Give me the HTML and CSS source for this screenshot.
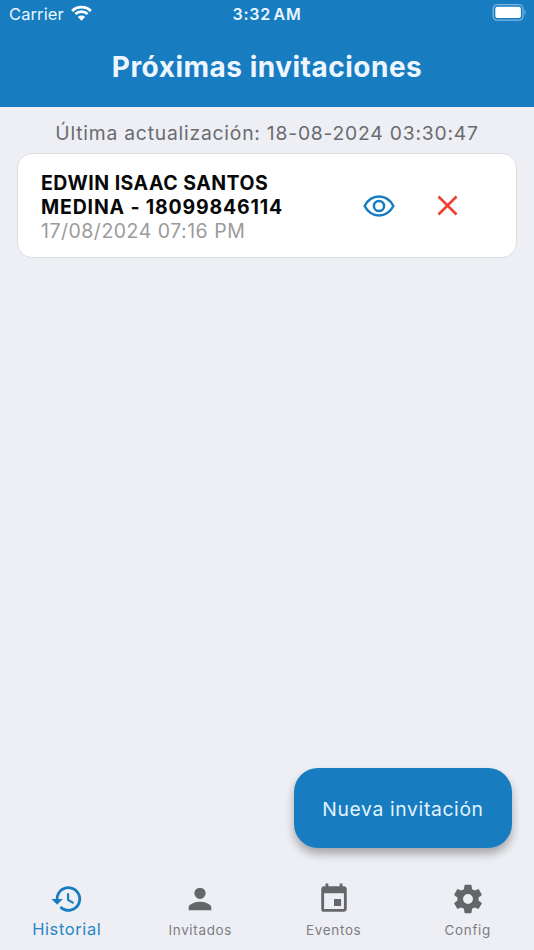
FILE: index.html
```html
<!DOCTYPE html>
<html lang="es">
<head>
<meta charset="utf-8">
<title>Próximas invitaciones</title>
<link rel="stylesheet" href="styles.css">
</head>
<body>
<div class="app">
  <header class="header">
    <div class="status">
      <div class="carrier"><span class="carrier-name">Carrier</span>
        <svg class="wifi" viewBox="0 0 22 16"><path d="M1.2 5.8a14 14 0 0 1 19.6 0M4.6 9.1a9.2 9.2 0 0 1 12.8 0" fill="none" stroke="#fff" stroke-width="2.9"/><path d="M7.2 12.1a5.4 5.4 0 0 1 7.6 0L11 16z" fill="#fff"/></svg>
      </div>
      <span class="time">3:32<span class="meridiem">AM</span></span>
      <div class="power"><svg class="battery" viewBox="0 0 35 17"><rect x="1.2" y=".7" width="29.8" height="15.4" rx="4" fill="none" stroke="#7db8e2" stroke-width="1.3"/><rect x="3.3" y="2.8" width="25.6" height="11.2" rx="2" fill="#fff"/><path d="M32.6 5.6q2.2 2.8 0 5.6z" fill="#7db8e2"/></svg></div>
    </div>
    <h1 class="title">Próximas invitaciones</h1>
  </header>
  <main class="content">
    <p class="updated">Última actualización: 18-08-2024 03:30:47</p>
    <article class="card">
      <div class="info">
        <div class="name">EDWIN ISAAC SANTOS<br><span class="name-second">MEDINA - 18099846114</span></div>
        <div class="date">17/08/2024 07:16 PM</div>
      </div>
      <svg class="eye" viewBox="0 0 32 22"><path d="M1.6 11C4.5 5.6 9.6 1.6 16 1.6S27.5 5.6 30.4 11C27.5 16.4 22.4 20.4 16 20.4S4.5 16.4 1.6 11Z" fill="none" stroke="#187dc0" stroke-width="2.5" stroke-linejoin="round"/><circle cx="16" cy="11" r="5.1" fill="none" stroke="#187dc0" stroke-width="2.5"/></svg>
      <svg class="cross" viewBox="0 0 20 20"><path d="M1.4 1.4l17.2 17.2M18.6 1.4l-17.2 17.2" fill="none" stroke="#f03e32" stroke-width="2.5"/></svg>
    </article>
    <button class="new">Nueva invitación</button>
  </main>
  <nav class="tabs">
    <div class="tab active"><svg viewBox="0 0 24 24"><path d="M13 3a9 9 0 0 0-9 9H1l3.890 3.890.070.140L9 12H6a7 7 0 1 1 2.060 4.940l-1.420 1.420A9 9 0 1 0 13 3zm-1 5v5l4.280 2.540.720-1.210-3.500-2.080V8H12z"/></svg><span>Historial</span></div>
    <div class="tab"><svg viewBox="0 0 24 24"><path d="M12 12a4 4 0 1 0 0-8 4 4 0 0 0 0 8zm0 2c-2.670 0-8 1.340-8 4v2h16v-2c0-2.660-5.330-4-8-4z"/></svg><span>Invitados</span></div>
    <div class="tab"><svg viewBox="0 0 24 24"><path d="M17 12h-5v5h5v-5zM16 1v2H8V1H6v2H5c-1.110 0-1.990.9-1.990 2L3 19a2 2 0 0 0 2 2h14c1.100 0 2-.9 2-2V5c0-1.100-.9-2-2-2h-1V1h-2zm3 18H5V8h14v11z"/></svg><span>Eventos</span></div>
    <div class="tab config"><svg viewBox="0 0 24 24"><path d="M19.430 12.980c.040-.320.070-.640.070-.980s-.030-.660-.070-.980l2.110-1.650c.190-.150.240-.420.120-.640l-2-3.460c-.120-.220-.390-.300-.610-.220l-2.490 1c-.520-.400-1.080-.730-1.690-.980l-.380-2.650A.488.488 0 0 0 14 2h-4c-.250 0-.460.180-.490.420l-.380 2.650c-.610.250-1.170.590-1.690.980l-2.490-1c-.230-.090-.490 0-.610.220l-2 3.460c-.130.220-.070.490.120.640l2.110 1.650c-.040.320-.070.650-.070.980s.030.660.070.980l-2.110 1.650c-.190.150-.240.420-.120.640l2 3.460c.120.220.390.300.610.220l2.490-1c.520.400 1.080.730 1.690.980l.380 2.650c.030.240.240.420.490.420h4c.250 0 .460-.180.490-.420l.380-2.650c.610-.250 1.170-.590 1.690-.980l2.490 1c.230.090.490 0 .610-.220l2-3.460c.120-.220.070-.490-.120-.640l-2.110-1.650zM12 15.500a3.500 3.500 0 1 1 0-7 3.500 3.500 0 0 1 0 7z"/></svg><span>Config</span></div>
  </nav>
</div>
</body>
</html>
```
FILE: styles.css
```css
* { box-sizing: border-box; }
body { margin: 0; font-family: Inter, "Liberation Sans", sans-serif; background: #eeeff4; }
.app { width: 534px; height: 950px; display: flex; flex-direction: column; overflow: hidden; }
.header { height: 107px; background: #187dc0; color: #edf5ff; flex: none; }
.status { height: 27px; display: grid; grid-template-columns: 1fr auto 1fr; align-items: center; font-size: 16.5px; color: #eaf6ff; }
.carrier { display: flex; align-items: center; gap: 7px; padding-left: 9px; }
.carrier-name { letter-spacing: .1px; }
.wifi { width: 21px; height: 16px; margin-top: -1px; }
.time { font-weight: 600; font-size: 16px; letter-spacing: .8px; }
.meridiem { margin-left: 2.5px; }
.power { display: flex; justify-content: flex-end; padding: 0 7px 2px 0; }
.battery { width: 35px; height: 17px; }
.title { margin: 0; height: 80px; line-height: 81px; text-align: center; font-size: 28px; font-weight: 650; letter-spacing: .5px; white-space: nowrap; }
.content { flex: 1; display: flex; flex-direction: column; padding: 13px 17px 21px; }
.updated { margin: 0; height: 26px; line-height: 27px; text-align: center; color: #6a6b6e; font-size: 19.3px; font-weight: 400; letter-spacing: .79px; white-space: nowrap; }
.card { height: 105px; margin-top: 7px; background: #fff; border: 1px solid #dddee1; border-radius: 15px; display: flex; align-items: center; padding: 0 58px 0 23px; }
.info { flex: 1; line-height: 24.3px; font-size: 19.5px; white-space: nowrap; padding-top: 3px; }
.name { font-weight: 650; color: #080808; letter-spacing: .5px; }
.name-second { letter-spacing: .83px; }
.date { color: #9b9b9b; letter-spacing: .5px; }
.eye { width: 32px; height: 22px; margin-right: 42px; }
.cross { width: 21px; height: 21px; }
.new { margin: auto 5px 0 auto; width: 218px; height: 80px; padding: 2px 0 0; border: 0; border-radius: 24px; background: #187dc0; color: #e2f3ff; font: 400 19.3px Inter, sans-serif; letter-spacing: .65px; box-shadow: 0 6px 10px rgba(0,0,0,.3); }
.tabs { height: 81px; flex: none; display: grid; grid-template-columns: repeat(4, 1fr); border-top: 1px solid #ebecf0; }
.tab { display: flex; flex-direction: column; align-items: center; padding-top: 12px; color: #7c7d80; font-size: 13.4px; letter-spacing: .7px; }
.tab svg { width: 34px; height: 34px; fill: #656669; }
.tab span { line-height: 22px; margin-top: 3px; }
.active { color: #2a86c4; font-size: 16.5px; letter-spacing: .6px; }
.active svg { fill: #187dc0; }
.active span { margin-top: 2px; }
.config { padding-left: 1px; }
```
